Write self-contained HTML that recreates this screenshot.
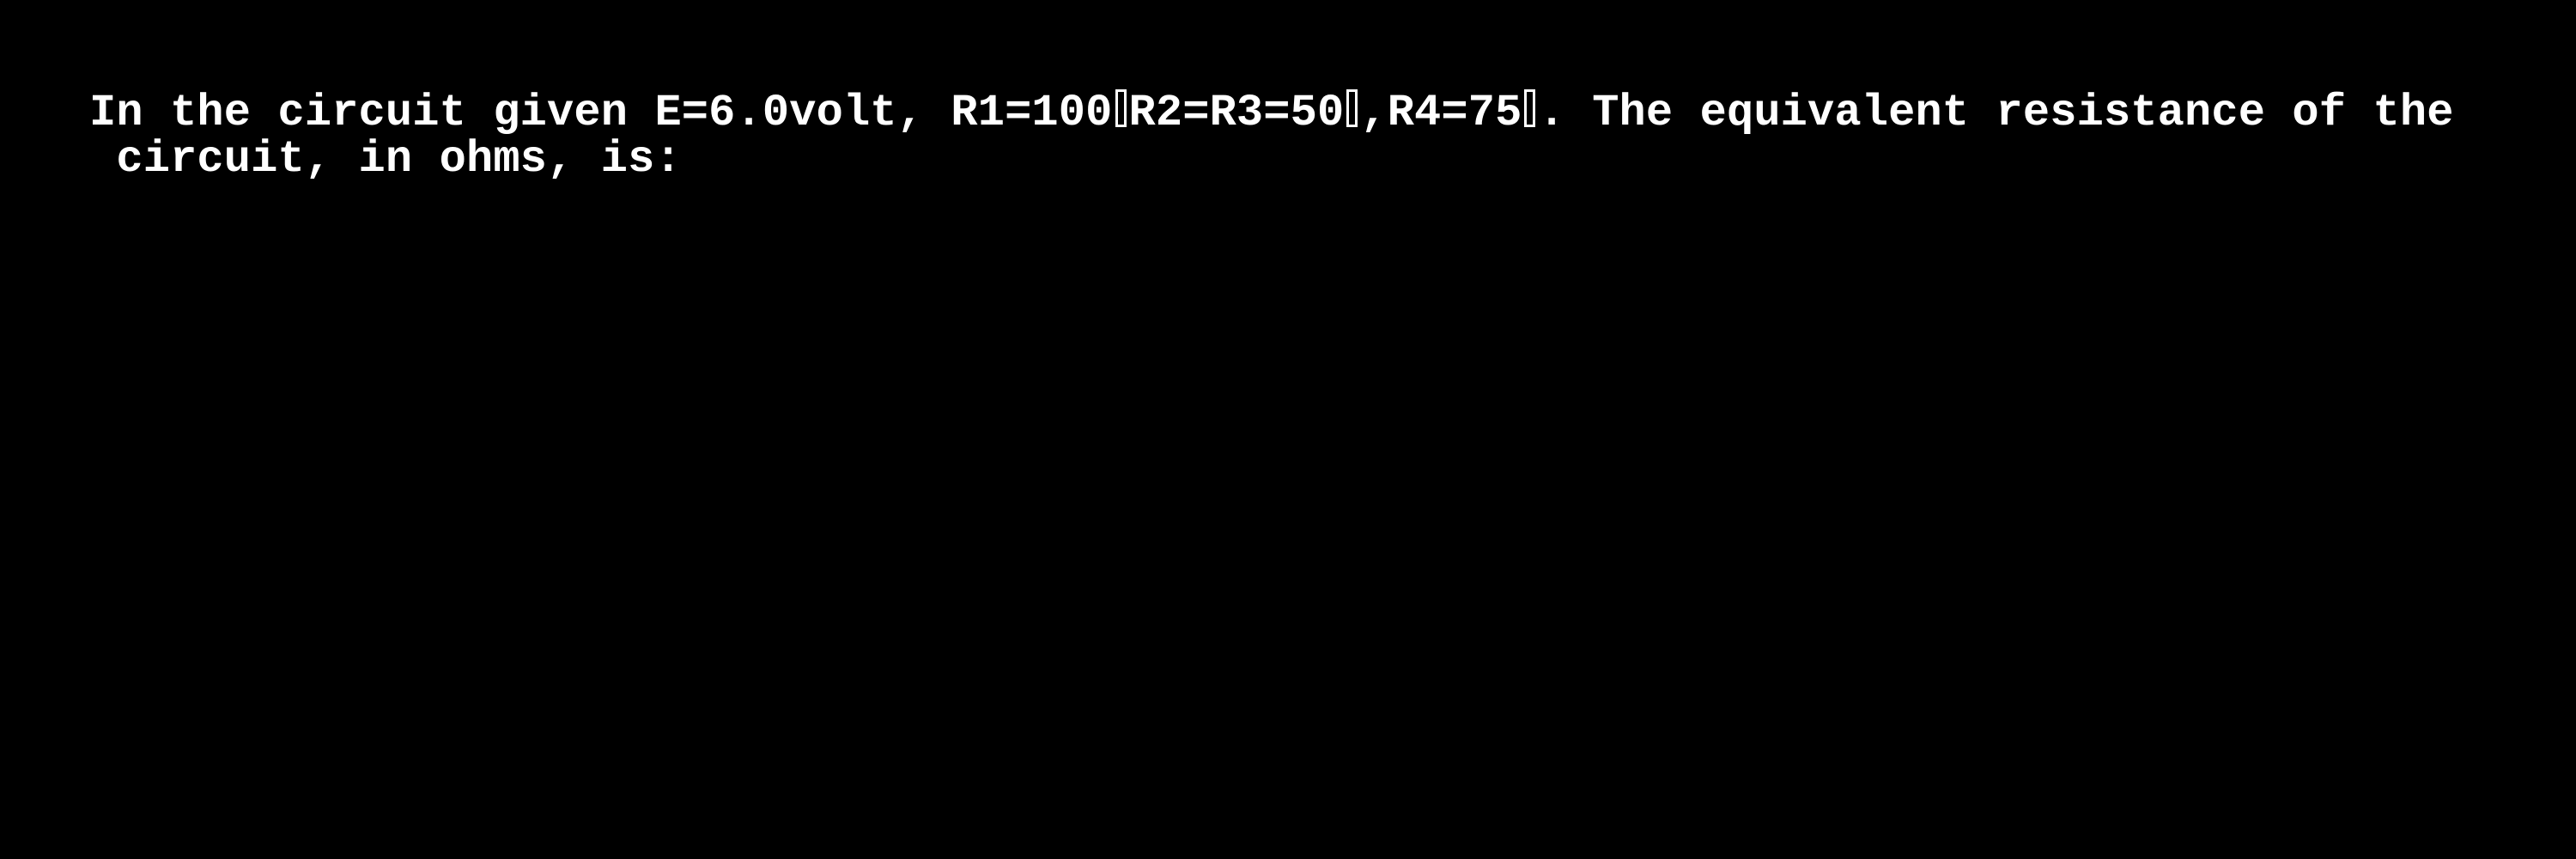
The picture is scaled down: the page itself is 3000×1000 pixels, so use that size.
<!DOCTYPE html>
<html><head><style>
html,body{margin:0;padding:0;background:#000;width:3000px;height:1000px;overflow:hidden}
.t{position:absolute;left:104px;top:104px;font-family:"Liberation Mono",monospace;font-size:52px;line-height:54px;letter-spacing:0.15px;color:#fff;white-space:pre;font-weight:bold}
.b{display:inline-block;width:13px;height:44px;border:3px solid #fff;box-sizing:border-box;vertical-align:-3px;margin:0 3px}
</style></head><body>
<div class="t">In the circuit given E=6.0volt, R1=100<span class="b"></span>R2=R3=50<span class="b"></span>,R4=75<span class="b"></span>. The equivalent resistance of the
 circuit, in ohms, is:</div>
</body></html>
